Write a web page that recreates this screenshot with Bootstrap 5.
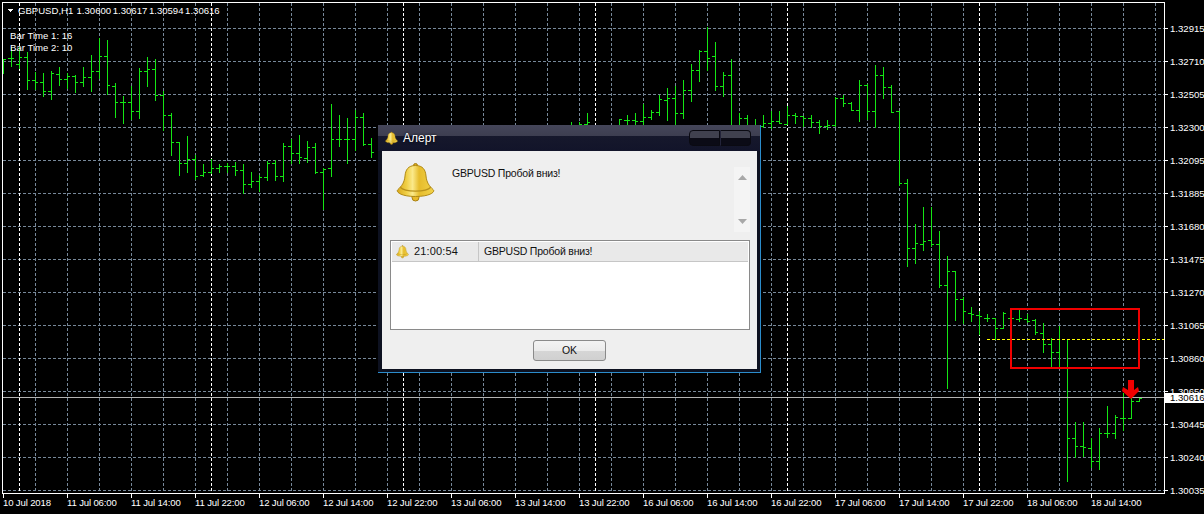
<!DOCTYPE html>
<html lang="en">
  <head>
    <meta charset="UTF-8" />
    <title>GBPUSD,H1</title>
    <link rel="stylesheet" href="https://cdn.jsdelivr.net/npm/bootstrap@5.3.3/dist/css/bootstrap.min.css" />
    <style>
      html, body { background: #000; margin: 0; height: 514px; overflow: hidden; }
      .mt-screen { width: 1204px; height: 514px; background: #000; }
      .mt-chart { left: 0; top: 0; }
      .mt-chart text { font-family: "Liberation Sans", Arial, sans-serif; font-size: 9.6px; fill: #fff; }
      .mt-chart text.mt-black { fill: #000; }
      .mt-chart text.mt-date { letter-spacing: -.16px; }
      .mt-chart text.mt-head { word-spacing: -1px; letter-spacing: -.02px; }
      .mt-window {
        left: 378px; top: 125px; width: 383px; height: 248px;
        background: #0d1120;
        border-right: 1px solid #2b8ccb;
        border-bottom: 1px solid #2b8ccb;
        padding: 0 3px 3px 4px;
        font-family: "Liberation Sans", Arial, sans-serif;
        font-size: 10.5px;
        color: #111;
      }
      .mt-title {
        height: 26px; margin: 0 -3px 0 -4px; padding: 0 9px 0 7px;
        background: linear-gradient(#45465a 0, #3d3e50 11px, #16182c 11px, #12142a 100%);
        color: #fff; font-size: 12px; text-shadow: 0 0 3px #000;
      }
      .mt-title-name { margin-left: 5px; }
      .mt-ctrl {
        width: 31px; height: 16px; margin-bottom: 1px;
        background: linear-gradient(#40414f 0, #40414f 50%, #0b0b16 50%, #0b0b16 100%);
        border: 1px solid #0a0a12;
      }
      .mt-ctrl-left { border-radius: 4px 0 0 4px; }
      .mt-ctrl-right { border-radius: 0 4px 4px 0; border-left: 1px solid #23243a; }
      .mt-client { height: 218px; background: #efefef; }
      .mt-msg { height: 89px; }
      .mt-bigbell { margin: 12px 17px 0 14px; width: 39px; height: 40px; flex: none; }
      .mt-msg-text { margin-top: 15px; letter-spacing: -.2px; }
      .mt-scroll { width: 16px; height: 65px; margin: 16px 7px 0 0; background: #f4f4f4; flex: none; }
      .mt-list { height: 90px; margin: 0 7px 0 8px; padding: 1px 1px 0; background: #fff; border: 1px solid #8a8a8a; }
      .mt-list-row { height: 20px; background: #e9e9e9; border-bottom: 1px solid #c6c6c6; }
      .mt-list-time { width: 87px; padding-left: 4px; border-right: 1px solid #c6c6c6; font-size: 11px; letter-spacing: .15px; }
      .mt-list-time span { margin-left: 5px; }
      .mt-list-text { padding-left: 5px; letter-spacing: -.2px; }
      .mt-foot { padding-top: 10px; }
      .mt-ok {
        width: 73px; height: 21px; padding: 0; font-size: 10.5px; color: #111;
        border: 1px solid #8a8a8a; border-radius: 3px;
        background: linear-gradient(#f3f3f3 0, #ebebeb 50%, #d6d6d6 50%, #d0d0d0 100%);
      }
    </style>
  </head>
  <body>
    <svg width="0" height="0" class="position-absolute">
      <defs>
        <linearGradient id="gold" x1="0" x2="1" y1="0" y2="0">
          <stop offset="0" stop-color="#d9a81c" />
          <stop offset=".25" stop-color="#f0cf45" />
          <stop offset=".42" stop-color="#fbe98a" />
          <stop offset=".6" stop-color="#e6bc2c" />
          <stop offset="1" stop-color="#f2d24a" />
        </linearGradient>
        <symbol id="bell" viewBox="0 0 39 40">
          <circle cx="19.5" cy="34.5" r="3.5" fill="#e8b92a" stroke="#a87f10" />
          <circle cx="19.5" cy="2.5" r="2" fill="#d9a91e" stroke="#a87f10" />
          <path d="M19.5 2.5C12 2.5 9.500 7 9 13C8.500 19 6 23 1.500 27C0 29 5 33.500 19.500 33.500C34 33.500 39 29 37.500 27C33 23 30.500 19 30 13C29.500 7 27 2.500 19.500 2.500Z" fill="url(#gold)" stroke="#b18a14" />
          <path d="M4 24C9 29.500 30 29.500 35 24" fill="none" stroke="#b9921c" stroke-width="1.200" />
        </symbol>
      </defs>
    </svg>

    <div class="mt-screen position-relative">
      <svg id="chart" class="mt-chart position-absolute" width="1204" height="514" shape-rendering="crispEdges"></svg>

      <div class="mt-window position-absolute d-flex flex-column">
        <div class="mt-title d-flex align-items-center">
          <svg width="13" height="15"><use href="#bell" /></svg>
          <span class="mt-title-name flex-grow-1">Алерт</span>
          <div class="mt-ctrl mt-ctrl-left"></div>
          <div class="mt-ctrl mt-ctrl-right"></div>
        </div>
        <div class="mt-client d-flex flex-column">
          <div class="mt-msg d-flex">
            <svg class="mt-bigbell"><use href="#bell" /></svg>
            <div class="mt-msg-text flex-grow-1">GBPUSD Пробой вниз!</div>
            <div class="mt-scroll d-flex flex-column justify-content-between align-items-center py-2">
              <svg width="9" height="5"><path d="M0 5L4.500 0L9 5Z" fill="#a8a8a8" /></svg>
              <svg width="9" height="5"><path d="M0 0L4.500 5L9 0Z" fill="#a8a8a8" /></svg>
            </div>
          </div>
          <div class="mt-list">
            <div class="mt-list-row d-flex align-items-center">
              <div class="mt-list-time d-flex align-items-center h-100">
                <svg width="13" height="14"><use href="#bell" /></svg>
                <span>21:00:54</span>
              </div>
              <div class="mt-list-text">GBPUSD Пробой вниз!</div>
            </div>
          </div>
          <div class="mt-foot d-flex justify-content-center">
            <button type="button" class="btn mt-ok">OK</button>
          </div>
        </div>
      </div>
    </div>

    <script src="https://cdn.jsdelivr.net/npm/bootstrap@5.3.3/dist/js/bootstrap.bundle.min.js"></script>
    <script>
      // x, high, low, open tick, close tick
      const bars = [
        [3,59,73,0,59],[11,47,66,58,58],[19,47,68,64,57],[27,52,89,57,80],[35,72,89,80,82],[43,73,96,82,91],
        [51,71,99,91,73],[59,67,85,74,79],[67,73,88,79,76],[75,75,92,76,82],[83,67,86,82,77],[91,55,91,77,71],
        [99,38,78,71,56],[107,40,94,56,85],[115,83,117,86,102],[123,96,123,102,102],[131,86,119,102,111],
        [139,68,118,111,71],[147,57,86,71,69],[155,59,100,69,95],[163,91,130,95,115],[171,113,155,115,142],
        [179,142,175,142,163],[187,136,172,163,159],[195,155,179,159,176],[203,164,176,175,172],[211,159,173,172,168],
        [219,164,172,168,166],[227,163,172,166,166],[235,162,175,166,170],[243,164,193,170,184],[251,172,187,184,181],
        [259,175,191,181,177],[267,161,180,177,163],[275,160,180,163,176],[283,143,181,176,146],[291,139,163,146,153],
        [299,135,163,153,157],[307,141,162,158,147],[315,143,173,147,172],[323,168,209,172,169],[331,104,176,168,139],
        [339,115,146,139,139],[347,118,163,139,139],[355,110,150,139,117],[363,113,145,117,144],[371,138,157,144,152],
        [571,122,130,0,0],[579,122,130,0,124],[587,113,130,124,122],[619,119,130,0,119],[627,115,130,120,120],
        [635,113,130,120,121],[643,104,130,121,117],[651,110,119,117,112],[659,95,115,112,99],[667,88,120,100,98],
        [675,86,130,98,113],[683,80,118,113,90],[691,64,101,90,70],[699,50,81,70,51],[707,27,70,51,58],[715,42,90,56,86],
        [723,72,96,86,75],[731,59,130,75,0],[739,113,130,0,118],[747,115,130,118,0],[755,119,130,0,0],
        [763,115,127,126,123],[771,111,128,123,121],[779,111,123,121,123],[787,106,124,124,115],[795,113,123,115,116],
        [803,116,126,116,118],[811,115,127,118,122],[819,120,133,122,126],[827,120,129,126,125],[835,97,126,125,98],
        [843,95,106,98,103],[851,102,110,103,110],[859,80,121,110,85],[867,84,119,85,111],[875,65,127,111,75],
        [883,67,98,75,87],[891,85,112,87,112],[899,111,185,111,183],[907,179,266,183,248],[915,224,263,248,243],
        [923,207,250,244,241],[931,207,246,240,244],[939,231,287,244,285],[947,256,388,285,271],[955,271,320,271,299],
        [963,297,323,299,311],[971,307,321,313,314],[979,311,334,315,316],[987,314,321,318,318],[995,318,339,318,328],
        [1003,312,328,328,313],[1011,316,322,318,318],[1019,310,321,319,318],[1027,314,322,319,321],[1035,319,334,320,332],
        [1043,323,352,333,344],[1051,338,367,344,352],[1059,326,367,352,367],[1067,339,481,367,438],[1075,422,457,438,446],
        [1083,422,456,446,447],[1091,438,467,448,461],[1099,428,469,461,433],[1107,406,437,433,433],[1115,415,438,433,417],
        [1123,393,430,418,418],[1131,398,418,418,401],[1139,397,401,401,398],
      ];
      const prices = ["1.32915","1.32710","1.32505","1.32300","1.32095","1.31885","1.31680","1.31475","1.31270","1.31065","1.30860","1.30650","1.30445","1.30240","1.30035"];
      const dates = ["10 Jul 2018","11 Jul 06:00","11 Jul 14:00","11 Jul 22:00","12 Jul 06:00","12 Jul 14:00","12 Jul 22:00","13 Jul 06:00","13 Jul 14:00","13 Jul 22:00","16 Jul 06:00","16 Jul 14:00","16 Jul 22:00","17 Jul 06:00","17 Jul 14:00","17 Jul 22:00","18 Jul 06:00","18 Jul 14:00"];

      const line = (x1, y1, x2, y2, color, dash) =>
        `<line x1="${x1}" y1="${y1}" x2="${x2}" y2="${y2}" stroke="${color}"${dash ? ' stroke-dasharray="3 2"' : ""} />`;
      const label = (x, y, str, cls) => `<text x="${x}" y="${y}"${cls ? ` class="${cls}"` : ""}>${str}</text>`;

      let out = "";
      // grid
      prices.forEach((p, i) => {
        const y = 28 + i * 33 + 0.5;
        out += line(3, y, 1164, y, "#778899", true);
        out += line(1164, y, 1168, y, "#fff");
      });
      for (let x = 35; x < 1164; x += 32) {
        out += line(x + 0.5, 3, x + 0.5, 493, "#778899", true);
      }
      for (let x = 19; x < 1164; x += 192) {
        out += line(x + 0.5, 3, x + 0.5, 493, "#fff", true);
      }
      // bars
      const green = "#14e614";
      bars.forEach(([x, hi, lo, open, close]) => {
        out += line(x + 0.5, hi, x + 0.5, lo + 1, green);
        if (open) out += line(x - 3, open + 0.5, x, open + 0.5, green);
        if (close) out += line(x + 1, close + 0.5, x + 3, close + 0.5, green);
      });
      out += line(987, 339.5, 1164, 339.5, "#ffff00", true);
      out += line(3, 397.5, 1164, 397.5, "#b4b4b4");
      out += `<rect x="1011" y="309" width="128" height="59" fill="none" stroke="#f00000" stroke-width="2" />`;
      out += `<path d="M1128 380H1134V390L1138 387L1139 391L1131 399L1122 391L1123 387L1128 390Z" fill="#f00000" shape-rendering="auto" />`;
      // frame
      out += line(2.5, 2, 2.5, 494, "#fff");
      out += line(2, 2.5, 1165, 2.5, "#fff");
      out += line(1164.5, 2, 1164.5, 494, "#fff");
      out += line(2, 493.5, 1165, 493.5, "#fff");
      // axes
      prices.forEach((p, i) => {
        out += label(1170, 28 + i * 33 + 4, p);
      });
      out += `<rect x="1165" y="393" width="39" height="10" fill="#fff" />`;
      out += label(1170, 401, "1.30616", "mt-black");
      dates.forEach((d, i) => {
        const x = 3 + i * 64;
        out += line(x + 0.5, 494, x + 0.5, 498, "#fff");
        out += label(x, 506, d, "mt-date");
      });
      // header
      out += `<path d="M7 9H13L10 12Z" fill="#fff" />`;
      out += label(18, 14, "GBPUSD,H1&#160;&#160;1.30600 1.30617 1.30594 1.30616", "mt-head");
      out += label(10, 39, "Bar Time 1: 16");
      out += label(10, 51, "Bar Time 2: 10");
      document.querySelector("#chart").innerHTML = out;
    </script>
  </body>
</html>
